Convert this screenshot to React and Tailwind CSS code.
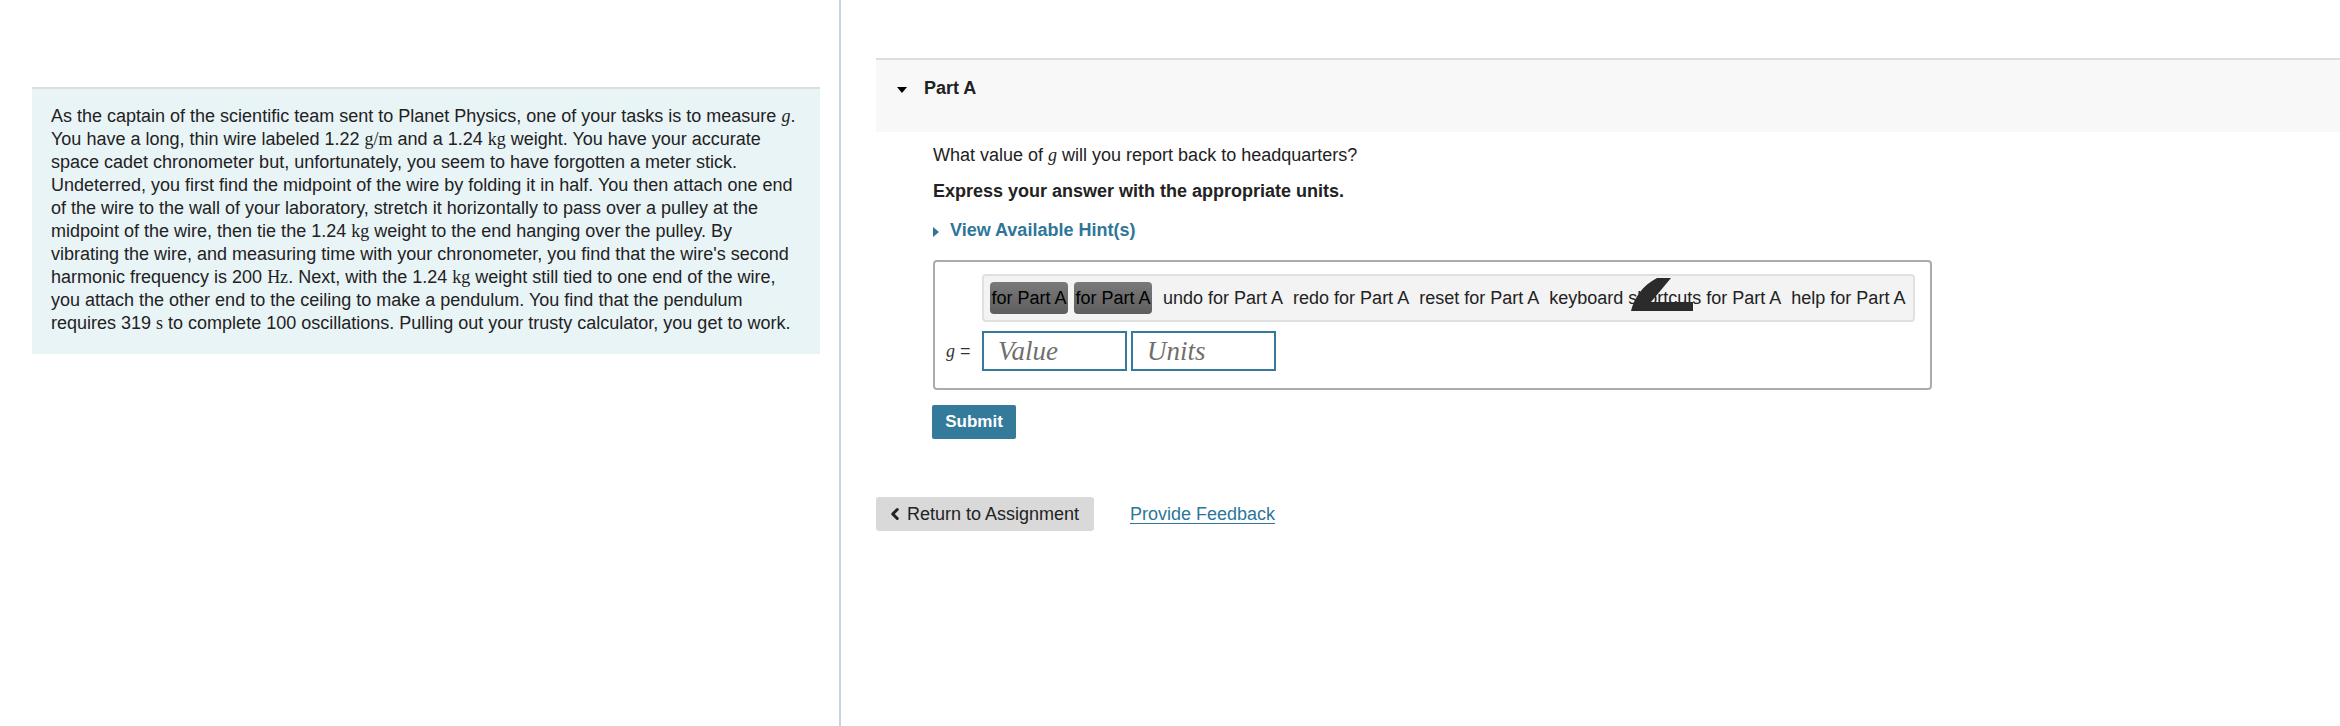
import { ChevronLeft } from "lucide-react";

const serif = { fontFamily: '"Liberation Serif", "DejaVu Serif", serif' };

const M = ({ children, italic }) => (
  <span className={italic ? "italic" : ""} style={serif}>
    {children}
  </span>
);

const ToolBtn = () => (
  <span className="flex h-[32px] w-[78px] items-center justify-center overflow-visible whitespace-nowrap rounded-[4px] bg-gradient-to-b from-[#7a7a7a] to-[#5e5e5e] text-[18px] text-black">
    for Part A
  </span>
);

const App = () => {
  return (
    <div
      className="flex h-[726px] w-[2340px] bg-white text-[#222]"
      style={{ fontFamily: '"Liberation Sans", Arial, sans-serif' }}
    >
      {/* Left: problem statement */}
      <div className="w-[841px] shrink-0 border-r-2 border-[#c6d4e3]">
        <div className="ml-[32px] mt-[87px] w-[788px] border-t-2 border-[#dddddd] bg-[#e9f4f7] pb-[19px] pl-[19px] pr-[20px] pt-[16px] text-[18px] leading-[23px]">
          As the captain of the scientific team sent to Planet Physics, one of your tasks is to measure <M italic>g</M>.
          You have a long, thin wire labeled 1.22 <M>g/m</M> and a 1.24 <M>kg</M> weight. You have your accurate
          space cadet chronometer but, unfortunately, you seem to have forgotten a meter stick. Undeterred, you
          first find the midpoint of the wire by folding it in half. You then attach one end of the wire to the
          wall of your laboratory, stretch it horizontally to pass over a pulley at the midpoint of the wire, then
          tie the 1.24 <M>kg</M> weight to the end hanging over the pulley. By vibrating the wire, and measuring
          time with your chronometer, you find that the wire's second harmonic frequency is 200 <M>Hz</M>. Next,
          with the 1.24 <M>kg</M> weight still tied to one end of the wire, you attach the other end to the ceiling
          to make a pendulum. You find that the pendulum requires 319 <M>s</M> to complete 100 oscillations.
          Pulling out your trusty calculator, you get to work.
        </div>
      </div>

      {/* Right: Part A */}
      <div className="flex-1 pl-[35px] pt-[58px]">
        <div className="flex h-[74px] items-start border-t-2 border-[#dddddd] bg-[#f8f8f8] pl-[21px] pt-[17px]">
          <span className="mr-[17px] mt-[10px] h-0 w-0 border-x-[5px] border-t-[6px] border-x-transparent border-t-black" />
          <span className="text-[18px] font-bold leading-[22px] text-[#222]">Part A</span>
        </div>

        <div className="pl-[57px]">
          <p className="mt-[12px] text-[18px] leading-[22px]">
            What value of <M italic>g</M> will you report back to headquarters?
          </p>
          <p className="mt-[14px] text-[18px] font-bold leading-[22px]">
            Express your answer with the appropriate units.
          </p>
          <div className="mt-[17px] flex items-center text-[18px] font-bold leading-[22px] text-[#2e7699]">
            <span className="mr-[11px] mt-[4px] h-0 w-0 border-y-[5px] border-l-[6px] border-y-transparent border-l-[#2e7699]" />
            View Available Hint(s)
          </div>

          <div className="mt-[19px] h-[130px] w-[999px] rounded-[4px] border-2 border-[#acacac] pl-[47px] pt-[12px]">
            <div className="flex h-[48px] w-fit items-center gap-[10px] rounded-[4px] border-2 border-[#e0e0e0] bg-[#f3f3f3] pl-[6px] pr-[8px] text-[18px] text-[#222]">
              <span className="flex gap-[6px]">
                <ToolBtn />
                <ToolBtn />
              </span>
              <span className="ml-[1px]">undo for Part A</span>
              <span>redo for Part A</span>
              <span>reset for Part A</span>
              <span className="relative">
                keyboard shortcuts for Part A
                <svg
                  className="absolute left-[82px] top-[-7px]"
                  width="62"
                  height="33"
                  viewBox="0 0 62 33"
                >
                  <path d="M0 33 C3 20 12 7 26 0 L40 0 L20 24 L62 24 L62 33 Z" fill="#2b2b2b" />
                </svg>
              </span>
              <span>help for Part A</span>
            </div>

            <div className="mt-[9px] flex items-center">
              <span className="-ml-[36px] w-[36px] text-[18px] text-[#333]">
                <M italic>g</M> =
              </span>
              <div
                className="flex h-[40px] w-[145px] items-center border-2 border-[#35799b] pl-[14px] text-[27px] italic text-[#6f6f6f]"
                style={serif}
              >
                Value
              </div>
              <div
                className="ml-[4px] flex h-[40px] w-[145px] items-center border-2 border-[#35799b] pl-[14px] text-[27px] italic text-[#6f6f6f]"
                style={serif}
              >
                Units
              </div>
            </div>
          </div>

          <button className="-ml-[1px] mt-[15px] h-[34px] w-[84px] rounded-[2px] bg-[#337a9b] text-[17px] font-bold text-white">
            Submit
          </button>
        </div>

        <div className="mt-[58px] flex items-center">
          <button className="flex h-[34px] w-[218px] items-center rounded-[3px] bg-[#d9d9d9] pl-[10px] text-[18px] text-[#222]">
            <ChevronLeft size={18} strokeWidth={4} className="mr-[3px]" />
            Return to Assignment
          </button>
          <a href="#" className="ml-[36px] text-[18px] text-[#2e7699] underline underline-offset-[3px]">
            Provide Feedback
          </a>
        </div>
      </div>
    </div>
  );
};

export default App;
